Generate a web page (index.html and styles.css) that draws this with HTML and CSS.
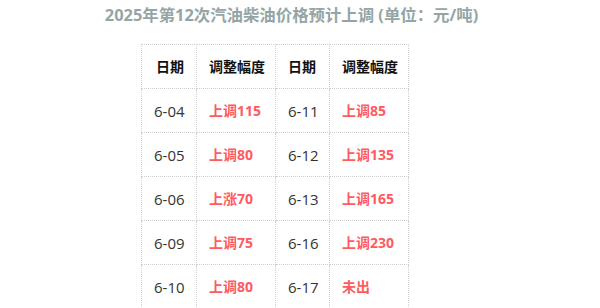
FILE: index.html
```html
<!DOCTYPE html>
<html lang="zh-CN">
<head>
<meta charset="utf-8">
<title>2025年第12次汽油柴油价格预计上调</title>
<link rel="stylesheet" href="styles.css">
</head>
<body>
<div class="page">
  <h1 class="title">2025年第12次汽油柴油价格预计上调 (单位：元/吨)</h1>
  <div class="table-wrap">
    <table class="prices">
      <thead>
        <tr>
          <th class="c-date">日期</th>
          <th class="c-val">调整幅度</th>
          <th class="c-date2">日期</th>
          <th class="c-val">调整幅度</th>
        </tr>
      </thead>
      <tbody>
        <tr><td class="date">6-04</td><td class="val">上调115</td><td class="date">6-11</td><td class="val">上调85</td></tr>
        <tr><td class="date">6-05</td><td class="val">上调80</td><td class="date">6-12</td><td class="val">上调135</td></tr>
        <tr><td class="date">6-06</td><td class="val">上涨70</td><td class="date">6-13</td><td class="val">上调165</td></tr>
        <tr><td class="date">6-09</td><td class="val">上调75</td><td class="date">6-16</td><td class="val">上调230</td></tr>
        <tr><td class="date">6-10</td><td class="val">上调80</td><td class="date">6-17</td><td class="val">未出</td></tr>
      </tbody>
    </table>
  </div>
</div>
</body>
</html>
```
FILE: styles.css
```css
html, body {
  margin: 0;
  padding: 0;
  background: #ffffff;
}
body {
  font-family: "Open Sans", "Noto Sans CJK SC", sans-serif;
  color: #333333;
  overflow: hidden;
}
.page {
  width: 583px;
}
.title {
  margin: 0;
  font-size: 16.4px;
  line-height: 30px;
  font-weight: bold;
  color: #95a5a6;
  text-align: center;
}
.table-wrap {
  padding: 14px 0 0 141px;
}
.prices {
  border-collapse: collapse;
  table-layout: fixed;
  width: 268px;
}
.prices th,
.prices td {
  border: 1px dotted #cfcfcf;
  padding: 0 11px 0 12px;
  height: 43px;
  line-height: 20px;
  text-align: left;
  white-space: nowrap;
}
.prices th {
  font-size: 14px;
  font-weight: bold;
  color: #111111;
}
.prices th.c-date { text-indent: 2px; }
.c-date { width: 31px; }
.c-date2 { width: 30px; }
.c-val { width: 55px; }
.prices td.date {
  font-size: 15px;
  color: #333333;
}
.prices td.val {
  font-size: 14px;
  font-weight: bold;
  color: #ff5a5f;
}
```
